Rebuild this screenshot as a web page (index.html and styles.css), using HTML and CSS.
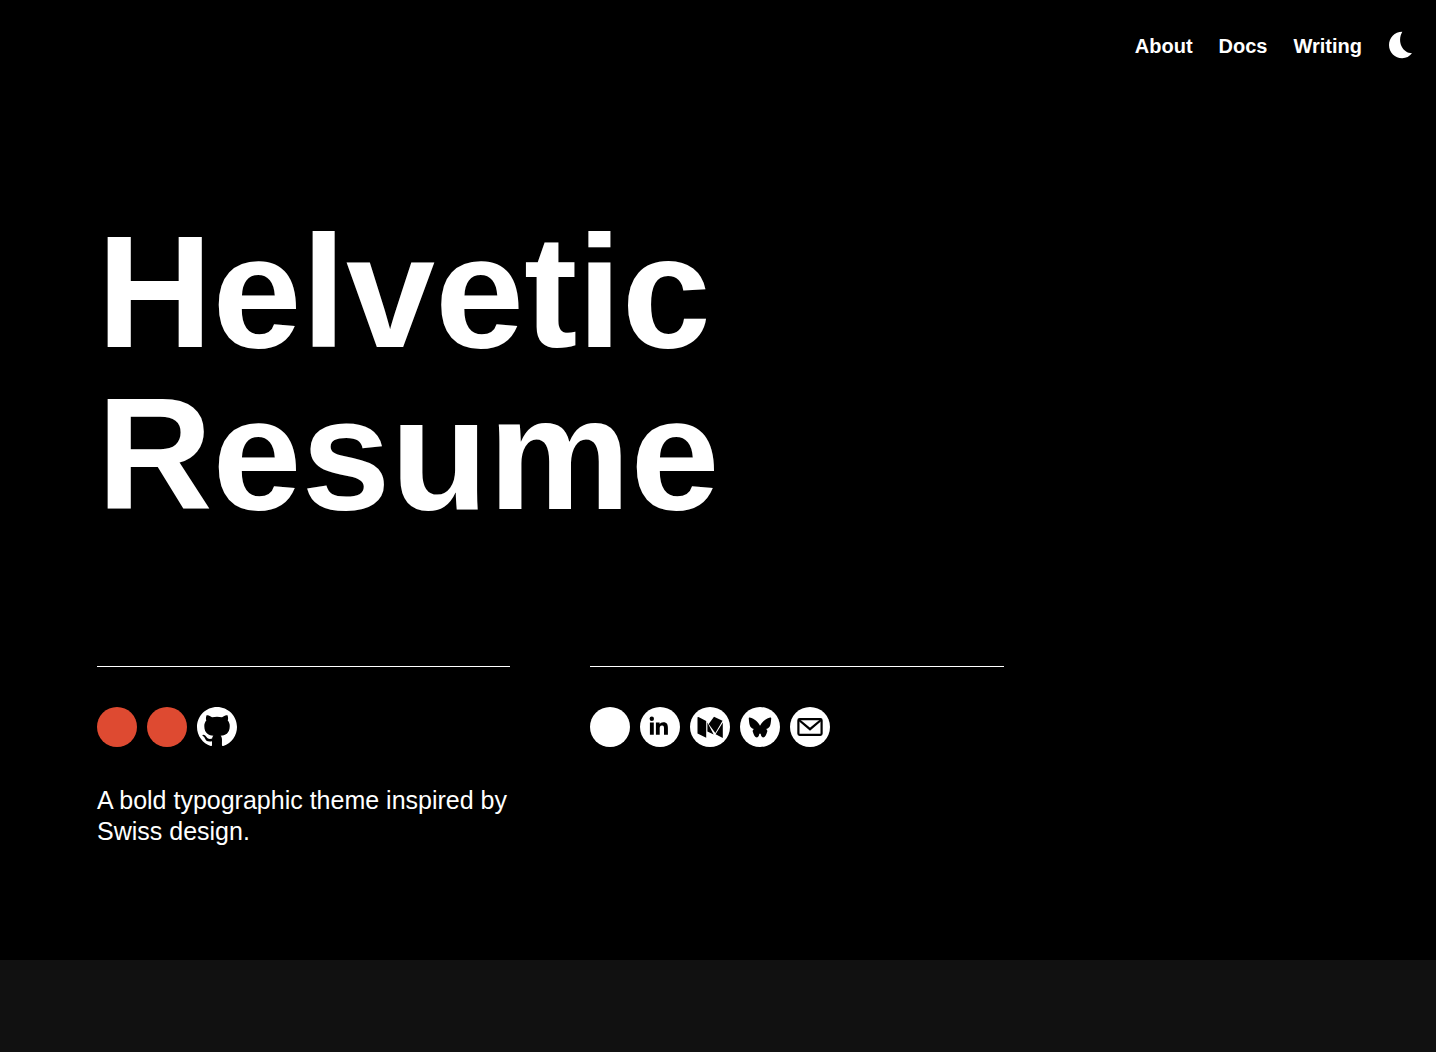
FILE: index.html
```html
<!DOCTYPE html>
<html lang="en">
<head>
<meta charset="utf-8">
<meta name="viewport" content="width=device-width, initial-scale=1">
<title>Helvetic Resume</title>
<link rel="stylesheet" href="styles.css">
</head>
<body>
<div class="hero">
  <header class="site-header">
    <nav class="nav" aria-label="Main">
      <a href="#about">About</a>
      <a href="#docs">Docs</a>
      <a href="#writing">Writing</a>
    </nav>
    <button class="theme-toggle" type="button" aria-label="Toggle theme">
      <svg viewBox="0 0 24 28"><path d="M14.300.8C6.500.8 1 7 1 14c0 7.800 6 13.200 13.200 13.200 4 0 7.300-1.700 9.800-4.900C15 22.300 8.500 11 14.300.8Z"/></svg>
    </button>
  </header>
  <main class="content">
    <h1 class="title">Helvetic<br>Resume</h1>
    <div class="columns">
      <section class="column">
        <div class="icons">
          <a class="dot dot-red" href="#demo" aria-label="Demo"></a>
          <a class="dot dot-red" href="#download" aria-label="Download"></a>
          <a class="dot dot-bare" href="#github" aria-label="GitHub">
            <svg viewBox="0 0 16 16"><path fill="#fff" d="M8 0C3.58 0 0 3.58 0 8c0 3.54 2.29 6.53 5.47 7.59.4.07.55-.17.55-.38 0-.19-.01-.82-.01-1.49-2.01.37-2.53-.49-2.69-.94-.09-.23-.48-.94-.82-1.13-.28-.15-.68-.52-.01-.53.63-.01 1.08.58 1.23.82.72 1.21 1.87.87 2.33.66.07-.52.28-.87.51-1.07-1.78-.2-3.64-.89-3.64-3.95 0-.87.31-1.59.82-2.15-.08-.2-.36-1.02.08-2.12 0 0 .67-.21 2.2.82A7.6 7.6 0 0 1 8 3.86c.68 0 1.36.09 2 .27 1.53-1.04 2.2-.82 2.2-.82.44 1.1.16 1.92.08 2.12.51.56.82 1.27.82 2.15 0 3.07-1.87 3.75-3.65 3.95.29.25.54.73.54 1.48 0 1.07-.01 1.93-.01 2.2 0 .21.15.46.55.38A8.01 8.01 0 0 0 16 8c0-4.42-3.58-8-8-8Z"/></svg>
          </a>
        </div>
        <p class="intro">A bold typographic theme inspired by Swiss design.</p>
      </section>
      <section class="column">
        <div class="icons">
          <a class="dot" href="#profile" aria-label="Profile"></a>
          <a class="dot" href="#linkedin" aria-label="LinkedIn">
            <svg viewBox="0 0 40 40"><circle cx="11.8" cy="11.800" r="2.200"/><path d="M9.900 15.500h3.900v12.300H9.900ZM15.900 15.500h3.700v1.700c.6-1.200 1.900-2 3.800-2 3.700 0 4.500 2.400 4.500 5.800v6.800H24v-6.100c0-1.500 0-3.300-2-3.300s-2.300 1.600-2.300 3.200v6.200h-3.800Z"/></svg>
          </a>
          <a class="dot" href="#medium" aria-label="Medium">
            <svg viewBox="0 0 40 40"><path d="M7.500 10.200 8.500 10l7.700 3.900v16.800L7.500 26.600ZM17.400 15.500 23.700 27.600l-6.300-3ZM24 9.700l8.500 4.100-7.200 12.300-6.600-9.200ZM32.800 15.500v15.400l-7.200-3.600Z"/></svg>
          </a>
          <a class="dot" href="#bluesky" aria-label="Bluesky">
            <svg viewBox="0 0 40 40"><path d="M20 18.800C18.600 15.800 14.500 11.300 9.800 10.500c-.9 0-1.100.4-1 1.300.3 2.600.3 4.200.9 6.200.6 2.200 1.800 3.500 4.200 3.900-1.300.9-1.500 2-.9 3.300.6 2.600 1.900 4.900 3.900 5.200 1.500 0 2.100-1.500 2.400-3.600h1.400c.3 2.100.9 3.600 2.400 3.600 2-.3 3.300-2.600 3.900-5.200.6-1.300.4-2.400-.9-3.300 2.400-.4 3.600-1.700 4.200-3.900.6-2 .6-3.600.9-6.200.1-.9-.1-1.300-1-1.300C25.500 11.300 21.400 15.800 20 18.800Z"/></svg>
          </a>
          <a class="dot" href="#mail" aria-label="Email">
            <svg viewBox="0 0 40 40"><g fill="none" stroke="#000" stroke-width="2.200"><rect x="8.400" y="12.200" width="23.200" height="15.600" rx="1.200"/><path d="m9 13 11 9.200L31 13"/></g></svg>
          </a>
        </div>
      </section>
    </div>
  </main>
</div>
</body>
</html>
```
FILE: styles.css
```css
* {
  box-sizing: border-box;
}

body {
  margin: 0;
  min-height: 100vh;
  background: #111;
  color: #fff;
  font-family: "Liberation Sans", Arial, Helvetica, sans-serif;
  font-size: 25px;
  line-height: 31px;
}

.hero {
  background: #000;
  padding-bottom: 113px;
}

.site-header {
  display: flex;
  justify-content: flex-end;
  align-items: flex-start;
  gap: 26px;
  padding: 31px 24px 0;
}

.nav {
  display: flex;
  gap: 26px;
  font-size: 20px;
  font-weight: bold;
}

.nav a {
  color: inherit;
  text-decoration: none;
}

.theme-toggle {
  width: 24px;
  height: 28px;
  padding: 0;
  border: 0;
  background: none;
  cursor: pointer;
}

.theme-toggle svg {
  display: block;
  fill: #fff;
}

.content {
  padding: 149px 97px 0;
}

.title {
  margin: 0 0 131px;
  font-size: 160px;
  line-height: 162px;
}

.columns {
  display: grid;
  grid-template-columns: 1fr 1fr;
  gap: 80px;
  width: 73%;
}

.column {
  border-top: 1px solid #fff;
  padding-top: 40px;
}

.icons {
  display: flex;
  gap: 10px;
}

.dot {
  width: 40px;
  height: 40px;
  border-radius: 50%;
  background: #fff;
}

.dot-red {
  background: #de4a31;
}

.dot-bare {
  background: none;
}

.dot svg {
  display: block;
  fill: #000;
}

.intro {
  margin: 38px 0 0;
}
```
